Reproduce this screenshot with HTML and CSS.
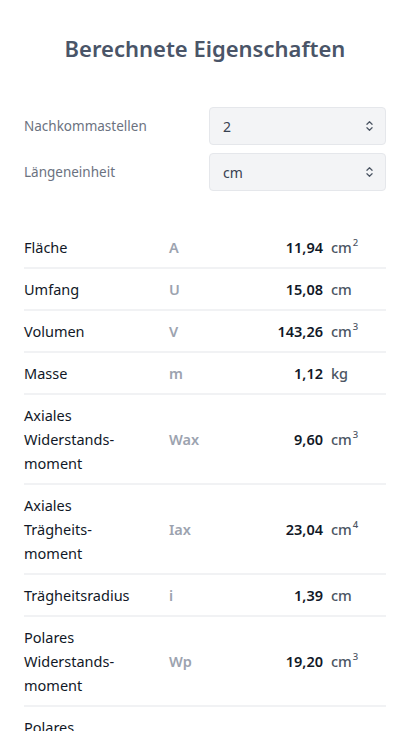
FILE: index.html
```html
<!DOCTYPE html>
<html lang="de">
<head>
<meta charset="utf-8">
<link rel="stylesheet" href="styles.css">
</head>
<body>
<main class="page">
  <h1 class="title">Berechnete Eigenschaften</h1>

  <div class="settings">
    <label class="set-label">Nachkommastellen</label>
    <div class="select"><span>2</span>
      <svg class="chev" viewBox="0 0 10 14" width="9" height="12"><path d="M2 5 L5 2 L8 5 M2 9 L5 12 L8 9" fill="none" stroke="#4b5563" stroke-width="1.4" stroke-linecap="round" stroke-linejoin="round"/></svg>
    </div>
    <label class="set-label">Längeneinheit</label>
    <div class="select"><span>cm</span>
      <svg class="chev" viewBox="0 0 10 14" width="9" height="12"><path d="M2 5 L5 2 L8 5 M2 9 L5 12 L8 9" fill="none" stroke="#4b5563" stroke-width="1.4" stroke-linecap="round" stroke-linejoin="round"/></svg>
    </div>
  </div>

  <div class="table">
    <div class="row"><div class="name">Fläche</div><div class="sym">A</div><div class="val">11,94</div><div class="unit">cm<sup>2</sup></div></div>
    <div class="row"><div class="name">Umfang</div><div class="sym">U</div><div class="val">15,08</div><div class="unit">cm</div></div>
    <div class="row"><div class="name">Volumen</div><div class="sym">V</div><div class="val">143,26</div><div class="unit">cm<sup>3</sup></div></div>
    <div class="row"><div class="name">Masse</div><div class="sym">m</div><div class="val">1,12</div><div class="unit">kg</div></div>
    <div class="row"><div class="name">Axiales Widerstands&shy;moment</div><div class="sym">Wax</div><div class="val">9,60</div><div class="unit">cm<sup>3</sup></div></div>
    <div class="row"><div class="name">Axiales Trägheits&shy;moment</div><div class="sym">Iax</div><div class="val">23,04</div><div class="unit">cm<sup>4</sup></div></div>
    <div class="row"><div class="name">Trägheitsradius</div><div class="sym">i</div><div class="val">1,39</div><div class="unit">cm</div></div>
    <div class="row"><div class="name">Polares Widerstands&shy;moment</div><div class="sym">Wp</div><div class="val">19,20</div><div class="unit">cm<sup>3</sup></div></div>
    <div class="row"><div class="name">Polares Trägheits&shy;moment</div><div class="sym">Ip</div><div class="val">46,08</div><div class="unit">cm<sup>4</sup></div></div>
  </div>
</main>
</body>
</html>
```

FILE: styles.css
```css
* { box-sizing: border-box; }
html, body { margin: 0; background: #fff; }
body {
  font-family: "Noto Sans", "Open Sans", sans-serif;
  color: #111827;
}
.page {
  padding: 32px 25px 0 24px;
}
.title {
  margin: 0;
  text-align: center;
  font-size: 22px;
  line-height: 32px;
  font-weight: 600;
  color: #4a5568;
}
.settings {
  margin-top: 43px;
  display: grid;
  grid-template-columns: 185px 1fr;
  row-gap: 8px;
  align-items: center;
}
.set-label {
  font-size: 13.5px;
  color: #6b7280;
}
.select {
  height: 38px;
  background: #f3f4f6;
  border: 1px solid #e5e7eb;
  border-radius: 4px;
  display: flex;
  align-items: center;
  justify-content: space-between;
  padding: 0 11px 0 13px;
  font-size: 14px;
  color: #374151;
}
.chev { display: block; }
.table {
  margin-top: 36px;
}
.row {
  display: grid;
  grid-template-columns: 137px 1fr auto 55px;
  column-gap: 8px;
  align-items: center;
  padding: 8px 0;
  border-bottom: 2px solid #f1f2f4;
  font-size: 14.5px;
  line-height: 24px;
}
.name {
  color: #111827;
  hyphens: manual;
  padding-right: 25px;
}
.sym {
  color: #9ca3af;
  font-weight: 600;
}
.val {
  text-align: right;
  font-weight: 600;
  color: #111827;
}
.unit {
  color: #4b5563;
  font-weight: 500;
}
.unit sup {
  font-size: 9.5px;
  line-height: 0;
  vertical-align: 7px;
  margin-left: 1px;
}
```
